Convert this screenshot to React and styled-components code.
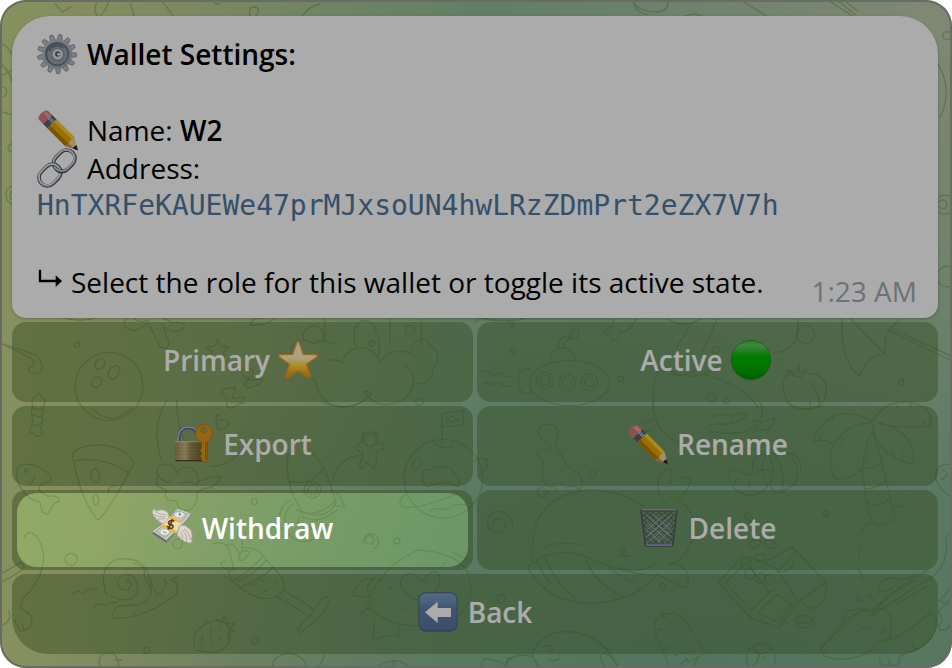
import React from 'react'
import styled, { createGlobalStyle } from 'styled-components'

const GlobalStyle = createGlobalStyle`
  body {
    margin: 0;
    background: #ffffff;
  }

  *, *::before, *::after {
    box-sizing: border-box;
  }
`

const ChatWindow = styled.main`
  position: relative;
  overflow: hidden;
  min-height: 100vh;
  padding: 16px 14px 14px 12px;
  border-radius: 26px;
  background:
    radial-gradient(ellipse 50% 75% at 100% 0%, #c0ccac 0%, #c0ccac00 100%),
    radial-gradient(ellipse 70% 60% at 75% 100%, #7eae8f 0%, #7eae8f00 100%),
    linear-gradient(90deg, #c9d88d 0%, #c4d08f 12%, #8fbd98 52%, #8fbb96 100%);
  font-family: 'Open Sans', 'Noto Sans', sans-serif;
  font-size: 28px;
  line-height: 38px;

  &::after {
    content: '';
    position: absolute;
    inset: 0;
    z-index: 2;
    border: 2px solid #686c64;
    border-radius: 26px;
    pointer-events: none;
  }
`

const Wallpaper = styled.svg`
  position: absolute;
  inset: 0;
  width: 100%;
  height: 100%;
  fill: none;
  stroke: #4f7d3e;
  stroke-opacity: 0.36;
  stroke-width: 4;
  stroke-linecap: round;
  stroke-linejoin: round;
`

const Content = styled.div`
  position: relative;
  display: flex;
  flex-direction: column;
  gap: 4px;
`

const Bubble = styled.article`
  display: flex;
  align-items: flex-end;
  justify-content: space-between;
  padding: 19px 21px 17px 25px;
  border-radius: 38px 38px 14px 14px;
  background: #ffffff;
  box-shadow: 0 1px 3px rgba(0, 0, 0, 0.25);
  color: #000000;
`

const Message = styled.div`
  min-width: 0;
`

const Line = styled.p`
  display: flex;
  align-items: center;
  gap: ${(props) => (props.$tight ? '8px' : '10px')};
  height: 38px;
  margin: 0;
  margin-top: ${(props) => (props.$spaced ? '38px' : '0')};
`

const Title = styled.h1`
  display: flex;
  align-items: center;
  gap: 10px;
  height: 38px;
  margin: 0;
  font-size: 28px;
  font-weight: 600;
`

const Strong = styled.strong`
  font-weight: 600;
`

const Address = styled.code`
  display: block;
  color: #4e789e;
  font-family: 'DejaVu Sans Mono', monospace;
  font-size: 28px;
  line-height: 38px;
  overflow-wrap: anywhere;
`

const Time = styled.time`
  flex: none;
  margin-bottom: -9px;
  color: #a0acb6;
`

const Keyboard = styled.div`
  display: grid;
  grid-template-columns: 1fr 1fr;
  gap: 4px;
`

const KeyButton = styled.button`
  position: relative;
  z-index: ${(props) => (props.$focused ? 1 : 'auto')};
  display: flex;
  align-items: center;
  justify-content: center;
  gap: ${(props) => (props.$iconAfter ? '8px' : '10px')};
  grid-column: ${(props) => (props.$wide ? '1 / -1' : 'auto')};
  height: 80px;
  padding: ${(props) => (props.$iconAfter ? '0 4px 4px 0' : '0 0 4px')};
  border: none;
  border-radius: ${(props) => (props.$wide ? '14px 14px 36px 36px' : '14px')};
  background: rgba(76, 112, 50, 0.44);
  color: #ffffff;
  font: inherit;
  font-weight: 600;
  cursor: pointer;
`

// Dims everything in the window except the key it sits on
const Spotlight = styled.span`
  position: absolute;
  inset: 3px 5px;
  border-radius: 20px;
  box-shadow: 0 0 0 4000px rgba(0, 0, 0, 0.33);
  pointer-events: none;
`

const EmojiSvg = styled.svg`
  flex: none;
  width: 40px;
  height: 40px;
  overflow: visible;
`

const ArrowSvg = styled.svg`
  flex: none;
  width: 26px;
  height: 38px;
`

function Gear() {
  const teeth = Array.from({ length: 13 }, (_, i) => (i * 360) / 13 + 10)
  return (
    <EmojiSvg viewBox="0 0 120 120" aria-hidden="true">
      <defs>
        <linearGradient id="gear" x1="0" y1="0" x2="1" y2="1">
          <stop offset="0" stopColor="#bcc4cd" />
          <stop offset="1" stopColor="#98a1ac" />
        </linearGradient>
      </defs>
      {teeth.map((deg) => (
        <path
          key={deg}
          d="M53 17 L55 2 Q60 0 65 2 L68 17 Z"
          fill="#b9c0c9"
          stroke="#747d88"
          strokeWidth="2"
          transform={`rotate(${deg} 60 60)`}
        />
      ))}
      <circle cx="60" cy="60" r="45" fill="url(#gear)" />
      <circle cx="60" cy="60" r="36" fill="#69717e" />
      <circle cx="61" cy="61" r="32" fill="#98a1ac" stroke="#68717d" strokeWidth="3" />
      <path d="M36 51 A27 27 0 0 1 78 41" fill="none" stroke="#69727e" strokeWidth="6" />
      <circle cx="62" cy="61" r="18" fill="#dce1e6" stroke="#858e99" strokeWidth="4" />
      <circle cx="62" cy="60" r="8" fill="#6a5d58" />
      <circle cx="65" cy="61" r="4" fill="#f0f0f0" />
    </EmojiSvg>
  )
}

function Pencil() {
  return (
    <EmojiSvg viewBox="0 0 120 120" aria-hidden="true">
      <g transform="translate(15 13) rotate(45)">
        <path d="M6 -20 Q-4 -17 -4 0 Q-4 17 6 18 L25 18 V-20 Z" fill="#d9787c" />
        <path d="M4 -14 Q11 -17 25 -15 V-5 H0 Z" fill="#f29ba0" />
        <path d="M23 -20 H42 V18 H23 Z" fill="#606a78" />
        <path d="M23 -13 H42 V-2 H23 Z" fill="#a8bccf" />
        <path d="M29 -20 V18 M36 -20 V18" stroke="#3c424d" strokeWidth="2" />
        <path d="M42 -20 H117 L125 -10 L117 0 L125 9 L116 18 H42 Z" fill="#e6a800" />
        <path d="M42 -20 H117 L120 -10 H42 Z" fill="#ffd02b" />
        <path d="M42 6 H120 L116 18 H42 Z" fill="#ba7c00" />
        <path d="M117 -20 Q121 -11 115 -5 Q123 3 116 18 L149 2 L149 -2 Z" fill="#f5d29a" />
        <path d="M117 6 L146 3 L116 18 Z" fill="#c79355" />
        <path d="M139 -8 L153 0 L138 7 Q134 0 139 -8 Z" fill="#2c2c30" />
      </g>
    </EmojiSvg>
  )
}

function Chain() {
  return (
    <EmojiSvg viewBox="0 0 120 120" fill="none" aria-hidden="true">
      <g transform="rotate(-45 60 60)">
        <rect x="56" y="35" width="70" height="50" rx="25" stroke="#454a52" strokeWidth="11" />
        <rect x="56" y="34" width="70" height="50" rx="25" stroke="#aeb6c2" strokeWidth="6" />
        <rect x="57" y="33" width="67" height="49" rx="24" stroke="#e7edf5" strokeWidth="3" />
        <rect x="-6" y="35" width="72" height="50" rx="25" stroke="#50555d" strokeWidth="11" />
        <rect x="-6" y="34" width="72" height="50" rx="25" stroke="#b6c3d2" strokeWidth="6" />
        <rect x="-4" y="33" width="68" height="49" rx="24" stroke="#f4f6fb" strokeWidth="3" />
        <path d="M56 60 Q56 79 76 85" stroke="#454a52" strokeWidth="11" />
        <path d="M56 57 Q56 78 78 84" stroke="#c2cad6" strokeWidth="6" />
      </g>
    </EmojiSvg>
  )
}

function Star() {
  return (
    <EmojiSvg viewBox="0 0 120 120" aria-hidden="true">
      <defs>
        <linearGradient id="star" x1="0" y1="0" x2="0" y2="1">
          <stop offset="0" stopColor="#ffefc4" />
          <stop offset="0.45" stopColor="#fff1c4" />
          <stop offset="0.68" stopColor="#ffcf2e" />
          <stop offset="1" stopColor="#e38b00" />
        </linearGradient>
      </defs>
      <path
        d="M60 4 Q63 5 65 11 L76 43 L113 44 Q122 46 116 51 L86 73 L97 108 Q98 117 91 113 L60 92 L29 113 Q22 117 23 108 L34 73 L4 51 Q-2 46 7 44 L44 43 L55 11 Q57 5 60 4 Z"
        fill="url(#star)"
        stroke="#e69a2e"
        strokeWidth="4"
      />
    </EmojiSvg>
  )
}

function GreenCircle() {
  return (
    <EmojiSvg viewBox="0 0 120 120" aria-hidden="true">
      <defs>
        <linearGradient id="green" x1="0" y1="0" x2="0" y2="1">
          <stop offset="0" stopColor="#40ad40" />
          <stop offset="0.12" stopColor="#63c863" />
          <stop offset="0.42" stopColor="#00b800" />
          <stop offset="0.65" stopColor="#00b400" />
          <stop offset="1" stopColor="#008c00" />
        </linearGradient>
      </defs>
      <circle cx="60" cy="60" r="59" fill="url(#green)" stroke="#168a16" strokeWidth="2" />
    </EmojiSvg>
  )
}

function LockKey() {
  return (
    <EmojiSvg viewBox="0 0 120 120" aria-hidden="true">
      <defs>
        <linearGradient id="lock" x1="0" y1="0" x2="1" y2="0">
          <stop offset="0" stopColor="#9c8c55" />
          <stop offset="0.35" stopColor="#cdbf88" />
          <stop offset="0.55" stopColor="#9b8b53" />
          <stop offset="1" stopColor="#74632f" />
        </linearGradient>
      </defs>
      <path d="M17 56 V42 Q19 11 47 11 Q71 12 76 42 V56" fill="none" stroke="#5a6b98" strokeWidth="10" />
      <path d="M15 56 V42 Q18 10 45 9 Q62 9 70 20" fill="none" stroke="#a7b8e4" strokeWidth="5" />
      <rect x="6" y="51" width="84" height="61" rx="3" fill="url(#lock)" />
      <path d="M6 62 H90 M6 72 H90 M6 82 H90 M6 92 H90 M6 102 H90" stroke="#70602f" strokeWidth="1.5" opacity="0.5" />
      <path d="M7 53 H89" stroke="#d2c58e" strokeWidth="3" />
      <path d="M7 110 H90" stroke="#55451d" strokeWidth="4" />
      <path d="M85 48 H103 V107 L94 115 L85 109 V101 L80 97 L85 91 V84 L80 79 L85 73 Z" fill="#e79a16" stroke="#9d6100" strokeWidth="2" />
      <path d="M98 53 V108" stroke="#a96800" strokeWidth="3" />
      <path
        fillRule="evenodd"
        d="M92 2 C110 2 119 15 118 29 C116 47 105 56 92 56 C77 56 67 44 67 29 C67 13 77 2 92 2 Z M92 9 A9 9 0 1 0 92 27 A9 9 0 1 0 92 9 Z"
        fill="#e0961c"
        stroke="#b67a12"
        strokeWidth="2"
      />
    </EmojiSvg>
  )
}

function FlyingMoney() {
  return (
    <EmojiSvg viewBox="0 0 120 120" aria-hidden="true">
      <path d="M76 4 Q95 7 117 18 L115 27 L44 105 Q20 91 1 77 L1 70 Z" fill="#7c7e7d" />
      <path d="M76 2 Q95 6 116 17 Q112 29 89 51 L43 97 Q23 84 1 70 Q30 50 49 31 Q63 18 76 2 Z" fill="#c4c9be" />
      <path d="M77 8 L106 19 L84 44 L54 32 Z M31 55 L62 68 L40 89 L11 70 Z" fill="none" stroke="#8c958a" strokeWidth="2" />
      <ellipse cx="82" cy="20" rx="15" ry="9" fill="#e6ebdf" stroke="#9ab0a2" strokeWidth="2" />
      <ellipse cx="38" cy="72" rx="14" ry="9" fill="#edeee7" stroke="#a8ada3" strokeWidth="2" />
      <path d="M79 18 L88 19 M82 14 L84 24 M33 71 L43 74" stroke="#629376" strokeWidth="3" />
      <path d="M4 77 L42 102 M6 74 L43 99" stroke="#5d605f" strokeWidth="2" />
      <path d="M48 23 L87 40 L74 75 L27 52 Z" fill="#e9dcb5" />
      <path d="M48 23 L88 39 L84 45 L43 28 Z M32 48 L75 70 L72 77 L27 54 Z" fill="#efb536" />
      <path d="M67 40 Q57 34 50 42 Q48 49 57 50 Q67 53 61 60 Q53 64 45 54 M62 34 L48 65" fill="none" stroke="#5c4112" strokeWidth="5" />
      <path d="M3 5 Q8 2 15 9 Q26 3 37 7 Q52 12 50 28 L39 44 Q32 50 25 43 Q18 43 20 35 Q9 37 11 28 Q1 25 5 20 Q-2 13 3 5 Z" fill="#dcd7cf" stroke="#aaa398" strokeWidth="2" />
      <path d="M7 10 Q23 20 44 22 M8 21 Q24 28 40 27 M17 32 Q29 35 38 31" fill="none" stroke="#b7b0a6" strokeWidth="3" />
      <path d="M81 56 Q96 46 108 59 Q120 65 119 78 Q124 84 118 91 Q123 99 117 104 Q110 107 104 101 Q97 104 94 96 Q86 98 85 89 Q75 87 76 78 Z" fill="#dcd6cc" stroke="#aaa092" strokeWidth="2" />
      <path d="M84 73 Q93 79 92 92 M91 67 Q106 79 103 98 M96 63 Q113 73 116 97" fill="none" stroke="#b7ada0" strokeWidth="3" />
    </EmojiSvg>
  )
}

function Trash() {
  return (
    <EmojiSvg viewBox="0 0 120 120" fill="none" aria-hidden="true">
      <defs>
        <clipPath id="basket">
          <path d="M6 10 H114 L102 114 H18 Z" />
        </clipPath>
      </defs>
      <g clipPath="url(#basket)">
        {[-90, -72, -54, -36, -18, 0, 18, 36, 54, 72, 90].map((x) => (
          <React.Fragment key={x}>
            <path d={`M${x} 8 L${x + 120} 116`} stroke="#555768" strokeWidth="3" />
            <path d={`M${120 - x} 8 L${-x} 116`} stroke="#555768" strokeWidth="3" />
          </React.Fragment>
        ))}
        <path
          d="M26 24 L94 84 M44 20 L98 66 M24 44 L88 100 M30 70 L66 102 M94 24 L26 84 M76 20 L22 66 M96 44 L32 100 M90 70 L54 102"
          stroke="#a3adba"
          strokeWidth="3"
        />
      </g>
      <path d="M6 10 L19 112 M114 10 L101 112" stroke="#55545f" strokeWidth="4" />
      <rect x="3" y="3" width="114" height="8" rx="3" fill="#66606e" />
      <path d="M8 5 H112" stroke="#8fa5c0" strokeWidth="4" />
      <rect x="17" y="108" width="86" height="9" rx="3" fill="#5f6072" />
      <path d="M22 111 H98" stroke="#9eafd0" strokeWidth="4" />
    </EmojiSvg>
  )
}

function BackArrow() {
  return (
    <EmojiSvg viewBox="0 0 120 120" aria-hidden="true">
      <defs>
        <linearGradient id="back" x1="0" y1="0" x2="0" y2="1">
          <stop offset="0" stopColor="#7895b5" />
          <stop offset="0.2" stopColor="#7095be" />
          <stop offset="0.4" stopColor="#6080ab" />
          <stop offset="1" stopColor="#5b759c" />
        </linearGradient>
      </defs>
      <rect x="1" y="1" width="118" height="118" rx="22" fill="#4b6490" />
      <rect x="4" y="4" width="112" height="109" rx="19" fill="url(#back)" />
      <path d="M10 18 Q14 8 26 8 H94 Q106 8 110 18" fill="none" stroke="#91a8c1" strokeWidth="3" />
      <path d="M21 61 L59 29 V48 H99 V75 H59 V93 Z" fill="#ffffff" />
    </EmojiSvg>
  )
}

function TurnArrow() {
  return (
    <ArrowSvg viewBox="0 0 78 114" aria-hidden="true">
      <path d="M9 20 V54 H60" fill="none" stroke="#000000" strokeWidth="7" />
      <path d="M56 37 L75 54 L56 72 Z" fill="#000000" />
    </ArrowSvg>
  )
}

function Doodles() {
  return (
    <Wallpaper viewBox="0 0 2856 2004" preserveAspectRatio="xMidYMid slice" aria-hidden="true">
      {/* top edge and left side */}
      <path d="M165 12 L188 36 L213 20 M291 5 Q278 28 293 49 M300 49 Q318 30 326 5 M390 10 L404 50 M488 5 L521 49 M751 49 Q742 21 764 21 Q784 25 767 49 M907 48 Q925 20 959 12 M4 130 Q25 139 36 165 M5 190 L35 235 M6 226 L36 210 M7 198 Q32 210 34 245" />
      <circle cx="651" cy="4" r="8" />
      <circle cx="5" cy="275" r="15" />
      <path d="M5 335 L36 345 M36 430 Q20 439 26 452 L36 456 M36 558 A29 29 0 0 0 36 612 M36 573 A17 17 0 0 0 36 600" />
      <path d="M1901 6 Q1915 36 1975 36 Q2008 30 2004 6 M1900 8 Q1909 42 1945 43 M2055 49 Q2080 36 2106 48 M2230 5 L2300 48 M2490 5 L2555 46 M2514 3 L2567 44 M2537 4 L2572 32" />
      <circle cx="2841" cy="107" r="12" />
      <path d="M2814 190 Q2860 272 2820 352 M2816 592 A29 29 0 1 1 2816 636 M2816 608 A13 13 0 1 1 2817 620 M2850 800 A31 31 0 1 0 2850 860" />

      {/* row one, left */}
      <g transform="translate(0 540)">
        <path d="M190 412 Q240 430 290 412 M440 430 Q405 466 378 440 Q365 424 385 414 M400 414 Q420 432 442 420 L480 500 Q510 515 505 480 L487 438 Q530 467 551 445 Q560 423 516 428 L490 414 M750 437 Q755 410 790 414 M752 434 Q795 440 825 414" />
        <circle cx="231" cy="495" r="8" />
        <path d="M0 488 L94 535 Q108 546 94 560 Q81 564 88 576 Q115 588 127 565 Q128 535 97 521 L4 490" />
        <circle cx="327" cy="619" r="102" />
        <ellipse cx="300" cy="552" rx="13" ry="17" transform="rotate(40 300 552)" />
        <ellipse cx="342" cy="577" rx="15" ry="22" transform="rotate(35 342 577)" />
        <ellipse cx="290" cy="607" rx="13" ry="17" transform="rotate(40 290 607)" />
        <path d="M654 477 L664 498 L686 501 L669 516 L675 540 L653 528 L633 540 L638 516 L618 502 L644 498 Z" />
        <path d="M725 570 Q740 560 757 568 Q765 590 743 600 Q759 602 785 597 Q788 612 757 620 Q739 627 733 616 L746 593 Q724 594 725 570 Z M668 630 Q690 620 707 625 L697 655 L733 650 Q733 670 692 685 Q672 680 684 655 Q660 652 668 630 Z" />
        <path d="M974 414 V482 M1066 500 Q1050 425 1097 421 Q1140 430 1138 525 M1169 414 V492 M1264 420 V500 M1235 506 Q1250 470 1280 477 Q1288 500 1306 508 Q1320 545 1299 565 Q1300 612 1250 610 M990 541 Q1015 535 1032 550 M1030 535 Q1045 502 1090 503 Q1130 510 1140 550 Q1160 505 1220 516 L1245 530 M945 600 Q855 560 875 500 Q900 465 942 490 Q966 475 1002 492 M945 600 Q958 672 1025 682 Q1080 680 1115 640 Q1090 630 1091 635 Q1125 680 1165 673 Q1240 662 1241 600 Q1240 570 1212 555 M912 480 A31 31 0 1 1 970 480" />
        <circle cx="1230" cy="450" r="14" />
        <circle cx="1116" cy="491" r="8" />
        <circle cx="1258" cy="665" r="11" />
      </g>

      {/* row one, right */}
      <g transform="translate(1440 540)">
        <path d="M-18 430 L-5 415 M0 414 Q70 430 135 416 M84 423 L97 444 L101 422 M466 415 Q460 450 420 458 L410 480 Q390 490 392 463 L373 459 Q375 444 397 441 L403 416 M565 416 Q610 450 661 416 M636 430 L587 505 M712 416 L668 515 M545 552 Q515 600 520 690 M520 550 Q575 610 650 570 M550 558 Q610 605 675 580 L710 560 M665 580 Q805 620 838 690" />
        <path d="M5 573 Q28 575 40 588 Q55 570 75 590 L98 589 M10 611 Q30 605 40 617 Q55 600 75 619 L95 619 M150 567 Q115 560 116 605 Q115 650 154 638 M209 543 Q215 500 250 503 Q280 505 286 544 M236 503 Q238 465 271 470 L276 450 L296 448 Q299 480 278 475 L268 463 M253 502 Q248 482 273 474" />
        <ellipse cx="269" cy="609" rx="120" ry="68" />
        <circle cx="196" cy="601" r="25" /><circle cx="196" cy="601" r="14" />
        <circle cx="261" cy="607" r="25" /><circle cx="261" cy="607" r="14" />
        <circle cx="328" cy="606" r="25" /><circle cx="328" cy="606" r="14" />
        <circle cx="100" cy="514" r="7" /><circle cx="422" cy="597" r="8" />
        <circle cx="707" cy="510" r="10" /><circle cx="695" cy="654" r="13" /><circle cx="738" cy="663" r="8" />
        <circle cx="977" cy="463" r="27" />
        <path d="M953 416 Q965 513 880 518 M957 556 L960 580 L981 569 L965 590 Q945 595 920 572 L948 575 Z M943 582 Q900 580 910 630 Q920 690 990 686 Q1041 680 1039 625 Q1036 583 985 580 M991 607 Q1020 640 1018 681 M1086 416 Q1080 550 1140 587 Q1157 529 1215 521 Q1205 461 1257 420 M1110 415 L1213 520" />
        <path d="M1222 449 L1410 540 M1236 447 L1416 529" />
        <circle cx="1264" cy="607" r="8" />
      </g>

      {/* lower left */}
      <g transform="translate(0 1200)">
        <path d="M98 15 Q91 0 105 -10 Q115 -30 125 -9 Q142 -5 132 14 Q130 35 126 45 Q131 68 122 83 Q137 100 117 108 Q105 112 100 99 Q82 105 93 83 Q100 75 98 62 Q91 35 98 15 Z M98 21 Q113 37 132 20 M97 45 L125 53 M98 74 Q110 83 124 68" />
        <path d="M275 25 Q335 85 395 25 M501 0 Q450 80 485 180 M530 0 Q530 130 604 179 M632 200 Q710 192 740 125 M966 5 Q1030 35 1086 6 M691 7 Q714 5 735 10" />
        <path d="M217 160 Q250 128 325 137 Q385 150 401 190 Q340 310 301 355 Q292 365 285 350 Q235 280 217 160 Z M222 183 Q300 165 386 217 M285 205 Q310 230 294 248 Q270 247 272 221 Q278 207 285 205 Z M325 280 Q322 255 350 257 M285 315 Q270 285 290 284 Q305 310 285 315 Z" />
        <path d="M55 250 Q38 195 75 193 Q110 191 145 220 Q165 245 135 247 Q95 267 145 289 Q177 284 178 303 Q155 310 145 342 Q125 347 120 305 Q80 300 55 250 M105 230 Q98 250 84 252" />
        <circle cx="78" cy="212" r="5" />
        <path d="M660 45 Q639 40 655 90 Q680 85 689 70 Q679 57 661 60 M510 248 Q460 235 475 203 Q485 188 512 194 Q530 205 530 220 Q538 198 569 202 Q601 213 592 255 Q563 240 540 251 M472 232 Q460 260 499 269 Q485 305 530 303 Q535 338 570 330 Q597 307 590 280 L610 265 Q650 265 662 230 Q631 228 597 244" />
        <path d="M865 163 Q850 245 905 333 Q975 365 1008 310 L990 250 Q972 190 936 160 M866 243 Q930 260 970 208 M889 329 Q940 360 1004 307 M906 351 Q963 375 1010 330 M1002 282 L1016 280 L1034 322 L1007 317 M870 300 Q830 320 842 385 M878 312 Q840 348 864 389" />
        <circle cx="937" cy="269" r="25" /><circle cx="937" cy="269" r="14" />
        <circle cx="763" cy="305" r="9" /><circle cx="533" cy="432" r="14" />
        <path d="M995 245 Q1015 171 1088 164 M1088 123 Q1078 96 1110 96 Q1140 100 1130 130 L1148 131 Q1163 148 1129 154 L1129 190 Q1120 215 1112 195 L1099 187 Q1081 222 1079 195 L1091 154 Q1060 158 1073 135 Z M1086 100 L1092 110 M1120 98 L1136 96" />
        <circle cx="1110" cy="121" r="18" />
        <path d="M1326 130 V40 L1390 32 L1391 75 L1325 80 M1338 66 L1355 47 L1374 61 Z M1273 210 Q1260 245 1282 260 Q1330 238 1373 260 Q1387 235 1363 224 Q1352 187 1320 203 Q1304 190 1300 209 Z M1306 129 Q1324 150 1356 141 L1357 130 M1220 280 Q1190 300 1204 319 Q1247 332 1370 282 M1290 335 Q1300 319 1340 330 Q1360 307 1400 315" />
        <circle cx="1330" cy="236" r="118" />
        <ellipse cx="1250" cy="191" rx="11" ry="18" transform="rotate(20 1250 191)" />
        <path d="M72 414 Q84 386 107 407 Q137 442 129 495 Q118 550 66 600 L61 625 Q104 641 94 674 Q78 698 60 690 L44 661 M2 522 L64 487 L74 500 Q59 520 2 547 M2 679 Q39 662 26 634 M66 673 L71 690" />
        <circle cx="213" cy="478" r="18" />
        <path d="M218 583 Q228 567 246 580 Q253 584 260 570 L292 565 M282 623 Q293 604 314 617 Q321 620 326 610 L353 606 M320 588 Q291 500 350 478 Q448 464 453 562 Q458 608 408 615 L356 618 Q333 634 338 654 Q430 660 530 582 Q537 554 521 541 M378 548 L382 538 Q403 550 385 568 Q354 577 353 541 Q374 512 402 532 Q426 575 395 596 Q358 605 331 585 M404 490 Q440 500 432 525 L450 560 M447 530 L470 583 Q490 583 500 550 L491 535 M510 541 L532 529" />
        <path d="M640 432 Q672 418 687 451 L702 508 Q673 515 661 490 L678 483 M680 435 Q707 425 720 470 M718 467 Q728 444 747 456 Q738 482 720 482 Z M726 454 L727 421 M686 513 L692 541 Q729 535 790 468 Q775 442 731 443 M710 545 Q773 516 800 478 M725 559 Q794 533 820 500 M694 540 Q770 614 830 590 Q867 559 843 528 L791 470 M830 591 Q872 610 916 643 M849 569 L942 628 M930 650 L963 600 Q980 585 986 597 Q990 635 900 698 Q880 694 930 645 M755 556 L770 549 M780 539 L794 544 M806 519 L812 507 M790 572 L801 575 M820 553 L829 541" />
        <path d="M862 398 Q910 455 970 394 M895 350 L894 377 M918 377 L940 390 M1090 429 A23 23 0 1 1 1120 446 M1100 430 A13 13 0 1 1 1112 433" />
        <circle cx="1191" cy="423" r="9" /><circle cx="764" cy="722" r="10" /><circle cx="440" cy="751" r="9" />
        <path d="M583 720 Q580 680 652 659 Q703 672 687 726 Q670 770 588 750 Q580 740 583 720 Z M650 661 L667 669 L672 648 L684 672 L703 670 L692 684 L702 695 L685 696 L684 720 M607 711 V722 M632 687 V700 M659 682 V692 M632 711 V723 M658 710 V721 M605 736 V746 M635 739 V747" />
        <path d="M1103 619 Q1130 507 1254 450 Q1360 455 1400 510 Q1444 614 1340 671 Q1180 700 1103 619 M1055 585 Q1082 529 1125 535 Q1091 552 1108 592 Z M1077 645 L1120 614 M1124 660 L1119 720 Q1170 700 1195 709 L1197 680 M1260 606 Q1175 560 1213 526 Q1242 511 1266 546 Q1302 496 1318 526 Q1329 574 1260 606 M1137 535 L1153 546 M1165 568 L1178 563 M1189 643 L1194 652 M1214 620 L1203 629 M1320 505 L1336 488 M1361 458 L1398 478" />
        <path d="M300 804 Q289 760 325 758 Q358 760 356 804 M345 780 L367 780 M816 804 Q820 760 875 760 Q920 775 920 804 M976 762 L955 804 M1129 804 Q1180 760 1235 804 M1181 784 V804" />
      </g>

      {/* lower right */}
      <g transform="translate(1440 1200)">
        <path d="M217 260 Q187 262 187 215 Q196 187 177 171 Q158 144 209 149 Q218 138 205 127 Q173 120 175 95 Q184 67 216 74 Q244 88 230 117 Q223 144 244 165 Q255 204 293 215 Q316 247 298 271 Q282 250 259 264 M217 255 L232 272" />
        <path d="M-20 185 Q0 164 16 181 Q35 195 -5 229 M15 176 Q24 173 20 188 M25 386 Q13 336 56 334 Q102 338 99 391 M42 378 Q32 357 58 355 Q80 362 75 388 Q66 400 54 397 Q24 396 24 371" />
        <circle cx="338" cy="221" r="10" /><circle cx="186" cy="277" r="14" /><circle cx="63" cy="596" r="12" /><circle cx="547" cy="558" r="8" />
        <path d="M159 490 Q137 289 324 270 Q466 270 528 363 Q567 360 571 319 Q531 300 534 246 Q553 195 572 211 Q579 222 567 252 Q626 218 631 237 Q636 264 591 297 Q667 348 634 427 Q602 495 567 490 Q618 492 625 530 Q625 568 609 563 L544 528 Q430 524 318 469 Q218 440 160 490 M160 489 Q134 500 150 515 Q210 613 340 610 Q475 600 531 520 M170 475 Q173 500 208 546 M190 465 Q226 547 282 591 M315 468 Q333 542 429 592 M373 485 Q402 524 466 547 M410 502 Q470 525 529 490 M188 445 Q235 421 303 434 M412 466 L449 468" />
        <circle cx="428" cy="453" r="7" />
        <path d="M520 7 Q520 110 612 132 M838 5 Q867 61 797 94 Q750 108 687 91 M694 51 Q739 35 757 51 Q796 26 798 51 Q777 72 725 72 L691 76 M818 61 L844 67 L884 54 Q884 76 862 90 L825 91 Q845 75 818 61 M454 101 L516 92 M475 75 L520 58 M918 5 Q950 43 1029 17 M988 6 L993 28" />
        <path d="M817 218 Q810 155 875 162 Q963 140 963 210 Q958 250 905 276 Q870 285 874 242 M859 163 Q840 195 851 218 M866 164 Q882 195 880 215 M883 162 Q916 203 907 270 M918 157 Q969 195 944 251 M743 219 Q754 203 782 217 Q810 235 842 210 Q877 205 878 222 Q872 269 819 287 Q750 282 743 219 M770 235 L763 254 M807 243 V263 M846 233 L857 240 M860 252 L862 263" />
        <path d="M1175 63 Q1090 20 1040 64 Q1002 96 1001 123 Q1028 117 1061 130 M1173 71 Q1110 64 1063 130 Q1038 185 1066 238 Q1148 238 1165 156 M1176 94 Q1138 180 1152 249 Q1158 330 1181 370 Q1209 385 1245 356 Q1226 279 1212 214 Q1194 145 1176 94 M1178 70 Q1185 167 1300 193 Q1311 96 1194 67 Q1220 86 1350 79 Q1369 30 1295 7 Q1220 -5 1178 62 M1156 203 Q1181 213 1207 183 M1152 265 Q1185 271 1219 242 M1161 307 Q1199 333 1234 288 M1174 369 Q1155 366 1141 402 M1140 434 L1136 468 M1133 500 L1149 539 M1239 320 L1278 320 M1020 103 L1020 118 M1057 45 V66 M1092 118 L1084 126 M1235 145 L1240 167 M1267 159 V184 M1249 28 V18 M1292 8 V25 M1332 61 V77" />
        <circle cx="1038" cy="341" r="8" /><circle cx="1137" cy="598" r="7" />
        <path d="M1416 194 Q1365 187 1367 234 Q1378 274 1416 292 M1389 210 L1394 213 M1384 238 Q1397 238 1400 220 M1415 400 Q1390 398 1400 430 Q1402 510 1340 540 L1170 650" />
        <path d="M716 548 L787 468 L820 476 L889 505 L955 604 L898 683 L813 654 Z M736 548 L799 487 L868 576 L813 632 Z M834 638 L891 583 L935 613 L896 667 Z M853 488 L937 440 L945 458 L893 516 M937 440 L1038 548 Q1045 615 990 626 L955 601 M942 485 Q938 514 890 516 M961 599 L1037 549 M868 576 L886 569" />
        <circle cx="799" cy="491" r="15" /><circle cx="809" cy="523" r="15" /><circle cx="841" cy="535" r="15" /><circle cx="870" cy="538" r="15" />
        <ellipse cx="824" cy="431" rx="18" ry="12" transform="rotate(-25 824 431)" /><ellipse cx="871" cy="432" rx="18" ry="12" transform="rotate(20 871 432)" />
        <ellipse cx="842" cy="471" rx="16" ry="10" /><ellipse cx="805" cy="350" rx="15" ry="8" transform="rotate(45 805 350)" />
        <path d="M945 659 Q966 635 1000 658 L1001 672 Q984 690 950 679 Z M945 663 Q966 677 1000 660" />
        <path d="M527 709 Q511 638 575 640 Q613 640 638 699 L675 759 L626 786 L620 775 L592 804 M650 775 L644 801 M527 709 L569 800 M553 655 L543 646 M571 669 H580 M605 665 L610 659 M535 691 L546 687 M564 710 L574 714 M602 699 L610 696 M558 744 L565 738 M604 732 L611 740 M580 761 L589 767 M619 760 L633 754" />
        <circle cx="843" cy="774" r="43" />
        <path d="M808 745 Q862 755 817 801 M817 738 Q837 781 875 745 M832 776 L838 768 M852 776 L858 768" />
        <path d="M1023 744 Q1060 705 1098 666 Q1130 628 1177 632 Q1250 600 1229 719 Q1195 715 1175 752 Q1098 795 1030 766 Z M1091 670 Q1085 626 1137 628 Q1175 625 1181 641 Q1214 595 1260 560 L1344 510 M1206 574 Q1187 569 1199 550 Q1227 526 1261 540 L1310 528 M1200 577 L1239 564 M1177 629 L1235 581 L1310 540 M1252 610 L1340 560 M1230 719 Q1288 700 1348 639 L1367 654 Q1379 705 1318 744 L1259 769 Q1263 802 1230 796 L1224 775 M1200 775 Q1196 804 1219 794 M1137 692 Q1152 670 1169 687 M1198 699 Q1216 691 1216 680 M1041 749 L1037 754 M1162 584 L1184 603 M1297 732 L1305 750" />
        <path d="M1415 592 L1376 634 L1388 663 Q1367 685 1380 689 Q1403 697 1411 669 M1415 560 L1378 603 L1416 620 M2 804 Q5 765 35 780 Q60 781 78 799 Q89 755 158 769 Q160 726 218 699 Q350 675 415 800 M158 770 Q173 800 181 800 M197 736 L217 740 M202 753 Q212 762 217 747 M207 773 Q213 789 223 780 Q241 784 240 765 M377 800 Q350 770 371 758 Q397 766 415 804 M80 800 Q74 770 94 774" />
      </g>
    </Wallpaper>
  )
}

const keys = [
  { label: 'Primary', icon: <Star />, iconAfter: true },
  { label: 'Active', icon: <GreenCircle />, iconAfter: true },
  { label: 'Export', icon: <LockKey /> },
  { label: 'Rename', icon: <Pencil /> },
  { label: 'Withdraw', icon: <FlyingMoney />, focused: true },
  { label: 'Delete', icon: <Trash /> },
  { label: 'Back', icon: <BackArrow />, wide: true },
]

function App() {
  return (
    <>
      <GlobalStyle />
      <ChatWindow>
        <Doodles />
        <Content>
          <Bubble>
            <Message>
              <Title><Gear /> Wallet Settings:</Title>
              <Line $spaced><Pencil /> <span>Name: <Strong>W2</Strong></span></Line>
              <Line><Chain /> Address:</Line>
              <Address>HnTXRFeKAUEWe47prMJxsoUN4hwLRzZDmPrt2eZX7V7h</Address>
              <Line $spaced $tight>
                <TurnArrow /> Select the role for this wallet or toggle its active state.
              </Line>
            </Message>
            <Time>1:23 AM</Time>
          </Bubble>
          <Keyboard>
            {keys.map(({ label, icon, iconAfter, focused, wide }) => (
              <KeyButton
                key={label}
                type="button"
                $iconAfter={iconAfter}
                $focused={focused}
                $wide={wide}
              >
                {!iconAfter && icon}
                <span>{label}</span>
                {iconAfter && icon}
                {focused && <Spotlight />}
              </KeyButton>
            ))}
          </Keyboard>
        </Content>
      </ChatWindow>
    </>
  )
}

export default App
